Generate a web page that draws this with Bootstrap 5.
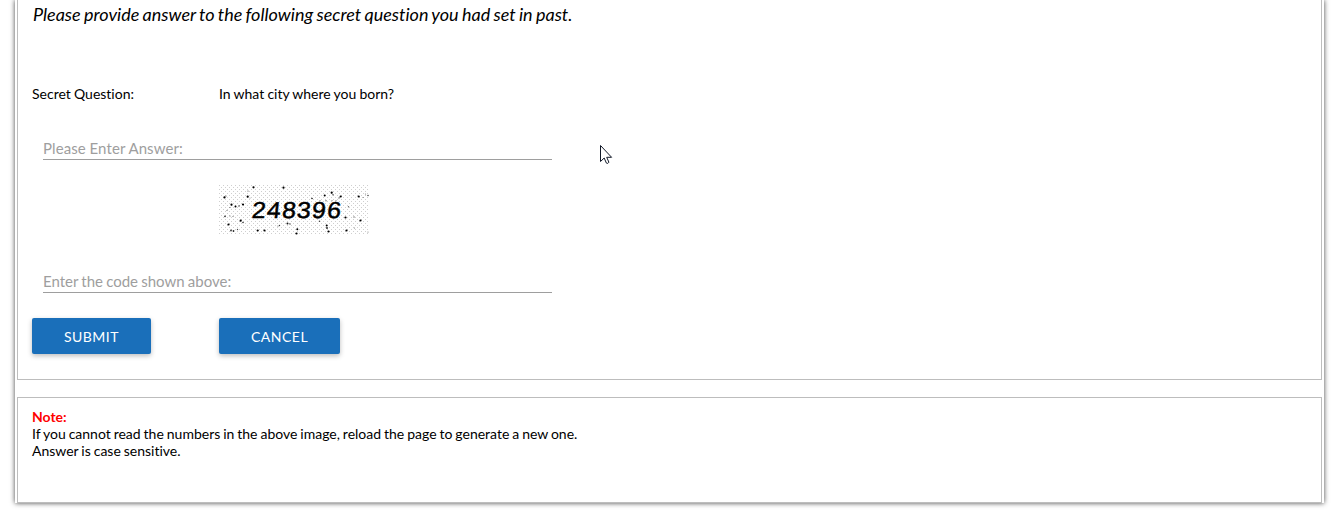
<!DOCTYPE html>
<html lang="en">
<head>
<meta charset="utf-8">
<meta name="viewport" content="width=device-width, initial-scale=1">
<title>Secret Question</title>
<link rel="stylesheet" href="https://cdn.jsdelivr.net/npm/bootstrap@5.3.0/dist/css/bootstrap.min.css">
<style>
body{font-family:Lato,"Liberation Sans",sans-serif;font-size:14px;line-height:17px;color:#000;background:#fff;height:510px;overflow:hidden;font-variant-ligatures:none;word-spacing:-.65px}
.sheet{width:1309px;height:503px;margin-left:15px;padding:0 2px;box-shadow:0 0 5px #444;background:#fff}
.panel-box{border:1px solid #bdbdbd;padding:0 14px}
.question-box{height:380px;border-top:0}
.note-box{height:106px;margin-top:17px;padding-top:10px}
.intro{font-size:18px;line-height:22px;padding-top:3px;margin-left:1px;height:85px;word-spacing:-.9px}
.first-col{width:187px}
.question-row{word-spacing:-.4px}
.field{width:509px;height:24px;margin-left:11px;border-bottom:1px solid #9e9e9e;font-size:15px;line-height:24px;color:#9e9e9e}
.answer-field{letter-spacing:.08px;word-spacing:-.1px}
.field input{outline:0;min-width:0}
.btn-send{--bs-btn-color:#fff;--bs-btn-bg:#1a6fba;--bs-btn-hover-bg:#155f9f;--bs-btn-hover-color:#fff;height:36px;padding:1px 0 0;border:0;border-radius:2px;font-size:14px;letter-spacing:.5px;box-shadow:0 2px 5px rgba(0,0,0,.26)}
.note-title{color:#f00}
.pointer{left:600px;top:145px}
</style>
</head>
<body>
<main class="sheet">
  <section class="panel-box question-box">
    <p class="intro fst-italic mb-0">Please provide answer to the following secret question you had set in past.</p>
    <div class="question-row d-flex">
      <div class="first-col">Secret Question:</div>
      <div>In what city where you born?</div>
    </div>
    <div class="field answer-field d-flex" style="margin-top:34px">
      <label for="answer">Please Enter Answer:</label>
      <input id="answer" class="flex-fill border-0 bg-transparent p-0" type="text">
    </div>
    <div class="d-flex" style="margin-top:25px">
      <div class="first-col"></div>
      <svg id="captcha" width="150" height="50" viewBox="0 0 150 50" role="img">
        <defs>
          <pattern id="grain" width="4" height="4" patternUnits="userSpaceOnUse">
            <path d="M0 0h1v1H0zM2 2h1v1H2z" fill="#cfcfcf"/>
          </pattern>
        </defs>
        <rect width="150" height="50" fill="#fff"/>
        <rect width="150" height="50" fill="url(#grain)"/>
        <g id="specks"></g>
        <text transform="translate(32.3 33) skewX(-6) scale(1.08 1)" x="0 13.9 27.9 41.7 55.6 69.6" font-family="Liberation Sans, sans-serif" font-size="23" stroke="#000" stroke-width=".5">248396</text>
      </svg>
    </div>
    <div class="field d-flex" style="margin-top:34px">
      <label for="code">Enter the code shown above:</label>
      <input id="code" class="flex-fill border-0 bg-transparent p-0" type="text">
    </div>
    <div class="d-flex" style="margin-top:25px">
      <div class="first-col"><button class="btn btn-send" type="button" style="width:119px">SUBMIT</button></div>
      <button class="btn btn-send" type="button" style="width:121px">CANCEL</button>
    </div>
  </section>
  <section class="panel-box note-box">
    <div class="note-title fw-bold">Note:</div>
    <div>If you cannot read the numbers in the above image, reload the page to generate a new one.</div>
    <div>Answer is case sensitive.</div>
  </section>
</main>
<svg class="pointer position-absolute" width="13" height="20" viewBox="0 0 13 20" aria-hidden="true">
  <path d="M.5 .5v16l3.7-3.5 2.2 5.1q1.4 1.1 2.5-.9l-2.2-4.9h4.9z" fill="#fff" stroke="#111827" stroke-width="1"/>
</svg>
<script src="https://cdn.jsdelivr.net/npm/bootstrap@5.3.0/dist/js/bootstrap.bundle.min.js"></script>
<script>
// x, y, radius, opacity of each captcha speck
const specks = [[34.5,2.3,1.1,1],[64.5,2.7,1.1,1],[5.5,12.4,1.1,1],[7,11,.6,.7],[28.7,11.7,1.1,1],[29,6,.6,.7],[12.5,19.7,1.1,1],[11,22.5,.5,.7],[16.5,21.5,1,1],[20,21,.8,.7],[24,19.5,1.1,1],[31,13,.5,.5],[6,31.3,.9,.8],[8,25.5,.6,.6],[11,31,.6,.6],[14,31.5,.6,.6],[21.7,35.7,1.1,1],[24,37.5,.8,.8],[9.5,39.5,1.1,1],[12,45.5,.9,.8],[14.5,46,.9,.8],[18.5,44.5,.7,.7],[38.7,45.5,1.1,1],[45.5,45.5,1.1,1],[60.5,40.5,.7,.7],[68.5,38.5,1,.9],[71,39,.7,.8],[59,41,.6,.6],[78.3,44.3,1,1],[77.5,48.5,1.1,1],[93,13.5,.8,.9],[105.7,10.5,1,1],[112.7,7.7,1.1,1],[114,9.8,.7,.8],[121.7,11.5,1.1,1],[120,13,.7,.6],[139.7,11.5,1.1,1],[149,10.5,.8,.7],[144,12.5,.6,.5],[146.5,9,.6,.5],[129.5,21.7,.7,.6],[126.5,32.5,1.1,1],[135,32,.7,.6],[141.5,35.5,1.1,1],[127.5,45.5,1.1,1],[135.5,43,.6,.5],[107.7,40.5,1,1],[108,43,.9,.9],[109.5,46.5,1.1,1],[100.5,36.3,.8,.7],[107,15.7,.7,.6],[101,15.5,.6,.5],[113,15.5,.6,.5],[117,15.5,.6,.5],[149,47,.6,.5]];
document.getElementById('specks').innerHTML = specks.map(([x,y,r,o]) => `<circle cx="${x}" cy="${y}" r="${r}" opacity="${o}"/>`).join('');
</script>
</body>
</html>
